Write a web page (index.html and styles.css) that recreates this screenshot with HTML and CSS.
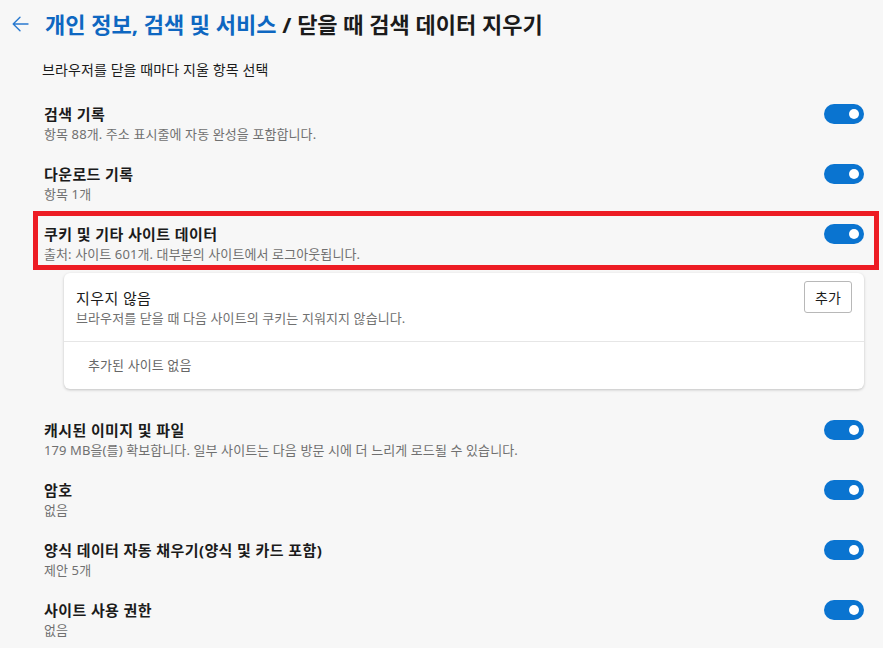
FILE: index.html
```html
<!DOCTYPE html>
<html lang="ko">
<head>
<meta charset="utf-8">
<title>닫을 때 검색 데이터 지우기</title>
<link rel="stylesheet" href="styles.css">
</head>
<body>
<header class="header">
  <svg class="back" width="17" height="16" viewBox="0 0 17 16" aria-hidden="true">
    <path d="M16 8H1.5M8 1.2L1.2 8L8 14.8" fill="none" stroke="#2a7ad0" stroke-width="1.4" stroke-linecap="round" stroke-linejoin="round"/>
  </svg>
  <h1 class="title"><span class="crumb">개인 정보, 검색 및 서비스</span> / 닫을 때 검색 데이터 지우기</h1>
</header>
<p class="subtitle">브라우저를 닫을 때마다 지울 항목 선택</p>
<main class="list">
  <div class="row">
    <div class="text"><div class="name">검색 기록</div><div class="desc">항목 88개. 주소 표시줄에 자동 완성을 포함합니다.</div></div>
    <span class="toggle"></span>
  </div>
  <div class="row">
    <div class="text"><div class="name">다운로드 기록</div><div class="desc">항목 1개</div></div>
    <span class="toggle"></span>
  </div>
  <div class="row row-marked">
    <div class="text"><div class="name">쿠키 및 기타 사이트 데이터</div><div class="desc">출처: 사이트 601개. 대부분의 사이트에서 로그아웃됩니다.</div></div>
    <span class="toggle"></span>
  </div>
  <section class="card">
    <div class="card-head">
      <div class="card-text"><div class="card-name">지우지 않음</div><div class="desc">브라우저를 닫을 때 다음 사이트의 쿠키는 지워지지 않습니다.</div></div>
      <button class="add" type="button">추가</button>
    </div>
    <div class="card-empty">추가된 사이트 없음</div>
  </section>
  <div class="row">
    <div class="text"><div class="name">캐시된 이미지 및 파일</div><div class="desc">179 MB을(를) 확보합니다. 일부 사이트는 다음 방문 시에 더 느리게 로드될 수 있습니다.</div></div>
    <span class="toggle"></span>
  </div>
  <div class="row">
    <div class="text"><div class="name">암호</div><div class="desc">없음</div></div>
    <span class="toggle"></span>
  </div>
  <div class="row">
    <div class="text"><div class="name">양식 데이터 자동 채우기(양식 및 카드 포함)</div><div class="desc">제안 5개</div></div>
    <span class="toggle"></span>
  </div>
  <div class="row">
    <div class="text"><div class="name">사이트 사용 권한</div><div class="desc">없음</div></div>
    <span class="toggle"></span>
  </div>
</main>
</body>
</html>
```

FILE: styles.css
```css
html, body {
  margin: 0;
  padding: 0;
  background: #f7f7f7;
  height: 100%;
  overflow: hidden;
}
body {
  font-family: "Noto Sans", "Noto Sans CJK KR", sans-serif;
  color: #1b1b1b;
}
.header {
  display: flex;
  align-items: center;
  height: 48px;
  padding-left: 12px;
}
.back {
  display: block;
  margin-right: 16px;
}
.title {
  margin: 0;
  font-size: 22px;
  font-weight: 700;
  line-height: 28px;
  color: #1b1b1b;
  white-space: nowrap;
}
.crumb {
  color: #0e67c1;
}
.subtitle {
  margin: 12px 0 24px 42px;
  font-size: 14px;
  line-height: 20px;
  letter-spacing: 0.1px;
}
.list {
  padding: 0 19px 0 44px;
}
.row {
  display: flex;
  justify-content: space-between;
  align-items: flex-start;
  height: 40px;
  margin-bottom: 20px;
}
.row-marked {
  position: relative;
  margin-bottom: 9px;
}
.row-marked::after {
  content: "";
  position: absolute;
  top: -13px;
  left: -11px;
  right: -15px;
  bottom: -6px;
  border: 5px solid #ed1c24;
  pointer-events: none;
}
.name {
  font-size: 15px;
  font-weight: 700;
  line-height: 20px;
  letter-spacing: 0.4px;
}
.desc {
  font-size: 13px;
  line-height: 20px;
  letter-spacing: 0.1px;
  color: #707070;
}
.toggle {
  position: relative;
  display: block;
  width: 40px;
  height: 20px;
  border-radius: 10px;
  background: #0a74d0;
  flex: none;
}
.toggle::after {
  content: "";
  position: absolute;
  top: 5px;
  right: 5px;
  width: 10px;
  height: 10px;
  border-radius: 50%;
  background: #fff;
}
.card {
  margin: 0 0 31px 20px;
  background: #fff;
  border-radius: 6px;
  box-shadow: 0 1px 3px rgba(0, 0, 0, 0.22);
}
.card-head {
  display: flex;
  justify-content: space-between;
  align-items: flex-start;
  height: 68px;
  padding: 0 12px;
  border-bottom: 1px solid #e6e6e6;
}
.card-text {
  padding-top: 15px;
}
.card-name {
  font-size: 15px;
  line-height: 20px;
  letter-spacing: 0.4px;
  color: #1b1b1b;
}
.add {
  margin-top: 8px;
  width: 48px;
  height: 32px;
  padding: 0;
  border: 1px solid #b8b8b8;
  border-radius: 3px;
  background: #fff;
  font-family: "Noto Sans", "Noto Sans CJK KR", sans-serif;
  font-size: 14px;
  color: #1b1b1b;
}
.card-empty {
  height: 47px;
  padding-left: 24px;
  font-size: 13px;
  line-height: 47px;
  letter-spacing: 0.1px;
  color: #666;
}
```
